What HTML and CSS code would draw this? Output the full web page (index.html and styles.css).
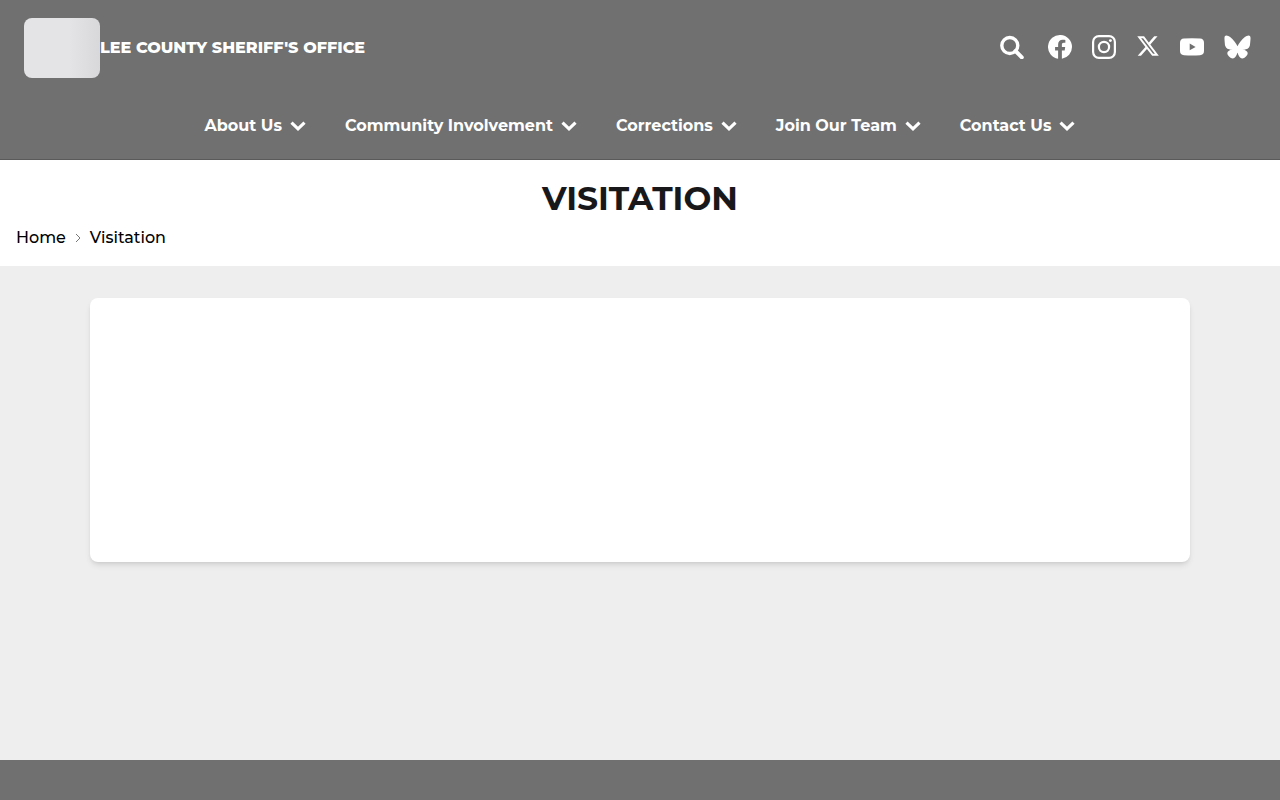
FILE: index.html
```html
<!DOCTYPE html>
<html lang="en">
<head>
  <meta charset="utf-8">
  <meta name="viewport" content="width=device-width, initial-scale=1">
  <title>Visitation</title>
  <link rel="stylesheet" href="styles.css">
</head>
<body>
  <!-- chevron shared by the menu buttons -->
  <svg class="sprite" aria-hidden="true">
    <symbol id="chevron" viewBox="0 0 16 16">
      <path d="M1.5 4.7L8 10.8l6.5-6.1" fill="none" stroke="currentColor" stroke-width="3.2"/>
    </symbol>
  </svg>

  <header class="header">
    <div class="top-bar">
      <a class="brand" href="#">
        <span class="logo"></span>
        <span class="brand-name">LEE COUNTY SHERIFF'S OFFICE</span>
      </a>
      <div class="actions">
        <button class="search" type="button" aria-label="Search">
          <svg class="icon" viewBox="0 0 24 24"><circle cx="9.8" cy="10.5" r="8" fill="none" stroke="currentColor" stroke-width="3.4"/><path d="M15.5 16l6.3 6.3" stroke="currentColor" stroke-width="4" stroke-linecap="round"/></svg>
        </button>
        <a href="#" aria-label="Facebook">
          <svg class="icon" viewBox="0 0 24 24"><path d="M24 12a12 12 0 1 0-13.9 11.85v-8.38H7.08V12h3.05V9.36c0-3.01 1.79-4.67 4.53-4.67 1.32 0 2.69.23 2.69.23v2.95h-1.52c-1.49 0-1.95.93-1.95 1.88V12h3.32l-.53 3.47h-2.79v8.38A12 12 0 0 0 24 12z" fill="currentColor"/></svg>
        </a>
        <a href="#" aria-label="Instagram">
          <svg class="icon" viewBox="0 0 24 24"><rect x="1.1" y="1.1" width="21.8" height="21.8" rx="5.8" fill="none" stroke="currentColor" stroke-width="2.2"/><circle cx="12" cy="12" r="5.1" fill="none" stroke="currentColor" stroke-width="2.2"/><circle cx="18.4" cy="5.6" r="1.45" fill="currentColor"/></svg>
        </a>
        <a href="#" aria-label="X">
          <svg class="icon" viewBox="0 0 24 24"><path d="M18.24 1.25h3.31l-7.23 8.26 8.5 11.24h-6.66l-5.21-6.82-5.97 6.82H1.68l7.73-8.84L1.25 1.25h6.83l4.71 6.23zm-1.16 17.52h1.83L7.08 3.13H5.12z" fill="currentColor"/></svg>
        </a>
        <a href="#" aria-label="YouTube">
          <svg class="icon" viewBox="0 0 24 24"><path d="M4 3.6Q12 3 20 3.6Q24 3.8 24 7.8V16Q24 20 20 20.2Q12 20.8 4 20.2Q0 20 0 16V7.8Q0 3.8 4 3.6zM9.7 8.6v6.6l5.9-3.3z" fill="currentColor" fill-rule="evenodd"/></svg>
        </a>
        <a href="#" aria-label="Bluesky">
          <svg class="icon icon-wide" viewBox="0 0 600 530"><path d="M135.72 44.03C202.216 93.951 273.74 195.17 300 249.49c26.262-54.316 97.782-155.54 164.28-205.46C512.26 8.009 590-19.862 590 68.825c0 17.712-10.155 148.79-16.111 170.07-20.703 73.984-96.144 92.854-163.25 81.433 117.3 19.964 147.14 86.092 82.697 152.22-122.39 125.59-175.91-31.511-189.63-71.766-2.514-7.38-3.69-10.832-3.708-7.896-.017-2.936-1.193.516-3.707 7.896-13.714 40.255-67.233 197.36-189.63 71.766-64.444-66.128-34.605-132.26 82.697-152.22-67.108 11.421-142.55-7.45-163.25-81.433C20.15 217.613 9.997 86.535 9.997 68.825c0-88.687 77.742-60.816 125.72-24.795z" fill="currentColor"/></svg>
        </a>
      </div>
    </div>

    <nav class="menu">
      <button type="button">About Us <svg><use href="#chevron"/></svg></button>
      <button type="button">Community Involvement <svg><use href="#chevron"/></svg></button>
      <button type="button">Corrections <svg><use href="#chevron"/></svg></button>
      <button type="button">Join Our Team <svg><use href="#chevron"/></svg></button>
      <button type="button">Contact Us <svg><use href="#chevron"/></svg></button>
    </nav>
  </header>

  <section class="page-title">
    <h1>VISITATION</h1>
    <div class="breadcrumb">
      <a href="#">Home</a>
      <svg viewBox="0 0 8 10"><path d="M2 1l4 4-4 4" fill="none" stroke="#777" stroke-width="1"/></svg>
      <span>Visitation</span>
    </div>
  </section>

  <main class="content">
    <div class="card"></div>
  </main>

  <footer class="footer"></footer>
</body>
</html>
```

FILE: styles.css
```css
* {
  box-sizing: border-box;
}

body {
  margin: 0;
  min-height: 100vh;
  display: flex;
  flex-direction: column;
  font-family: Montserrat, Inter, "Open Sans", sans-serif;
  font-size: 16px;
  line-height: 24px;
  color: #000;
  background: #eee;
}

a {
  color: inherit;
  text-decoration: none;
}

button {
  padding: 0;
  border: 0;
  background: none;
  color: inherit;
  font: inherit;
  cursor: pointer;
}

.sprite {
  display: none;
}

.header {
  padding-top: 18px;
  background: #707070;
  border-bottom: 1px solid #5a5a5a;
  color: #fff;
}

.top-bar {
  display: flex;
  justify-content: space-between;
  align-items: center;
  padding: 0 29px 0 24px;
}

.brand {
  display: flex;
  align-items: center;
  font-weight: 800;
}

.logo {
  width: 76px;
  height: 60px;
  border-radius: 8px;
  background: linear-gradient(90deg, #e4e4e7 60%, #d8d8db);
}

.actions {
  display: flex;
  align-items: center;
  gap: 20px;
  padding-bottom: 2px;
}

.search {
  margin-right: 4px;
}

.icon {
  display: block;
  width: 24px;
  height: 24px;
}

.icon-wide {
  width: 27px;
}

.menu {
  display: flex;
  flex-wrap: wrap;
  justify-content: center;
  gap: 39px;
  padding: 36px 24px 21px;
}

.menu button {
  display: flex;
  align-items: center;
  gap: 8px;
  font-weight: 700;
}

.menu svg {
  width: 16px;
  height: 16px;
}

.page-title {
  padding: 18px 16px 16px;
  background: #fff;
}

.page-title h1 {
  margin: 0;
  font-size: 33px;
  line-height: 40px;
  font-weight: 700;
  text-align: center;
  color: #18181b;
}

.breadcrumb {
  display: flex;
  align-items: center;
  gap: 8px;
  padding-top: 8px;
  font-weight: 500;
}

.breadcrumb svg {
  width: 8px;
  height: 10px;
}

.content {
  flex: 1;
  padding: 32px 24px;
}

.card {
  max-width: 1100px;
  min-height: 264px;
  margin: 0 auto;
  border-radius: 8px;
  background: #fff;
  box-shadow: 0 4px 6px -1px rgba(0, 0, 0, 0.1), 0 2px 4px -2px rgba(0, 0, 0, 0.1);
}

.footer {
  min-height: 40px;
  background: #707070;
}
```
